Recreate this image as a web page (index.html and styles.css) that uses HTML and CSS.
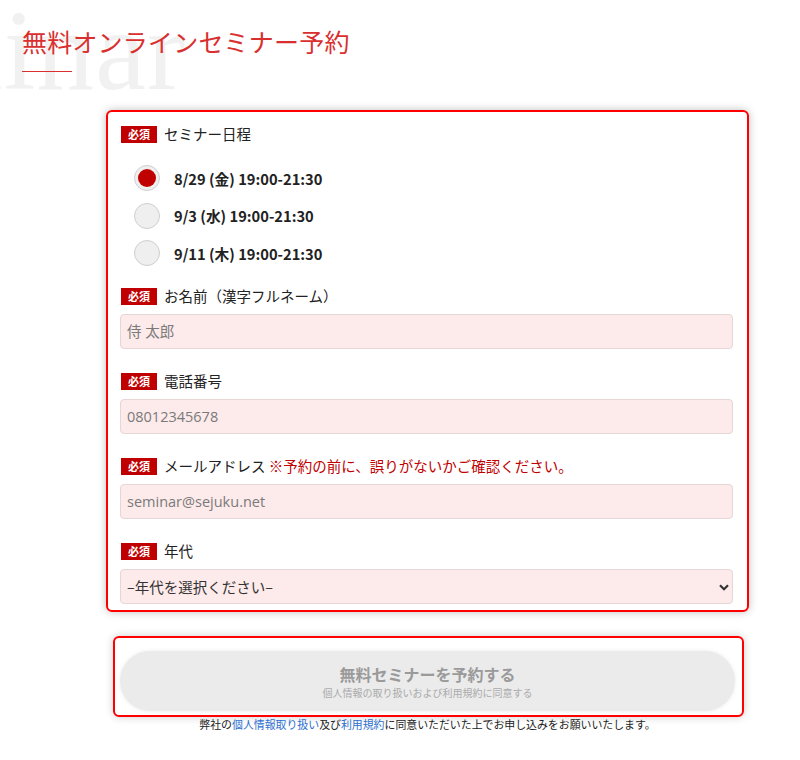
FILE: index.html
```html
<!DOCTYPE html>
<html lang="ja">
<head>
<meta charset="utf-8">
<title>無料オンラインセミナー予約</title>
<link rel="stylesheet" href="styles.css">
</head>
<body>
<header class="head">
  <span class="watermark" aria-hidden="true">Seminar</span>
  <h1 class="title">無料オンラインセミナー予約</h1>
  <div class="title-line"></div>
</header>

<main class="main">
  <form class="form-box">
    <div class="field field-date">
      <div class="label-row"><span class="badge">必須</span><span class="label">セミナー日程</span></div>
      <div class="radios">
        <label class="radio-row"><span class="radio checked"></span><span class="radio-text">8/29 (金) 19:00-21:30</span></label>
        <label class="radio-row"><span class="radio"></span><span class="radio-text">9/3 (水) 19:00-21:30</span></label>
        <label class="radio-row"><span class="radio"></span><span class="radio-text">9/11 (木) 19:00-21:30</span></label>
      </div>
    </div>

    <div class="field">
      <div class="label-row"><span class="badge">必須</span><span class="label">お名前（漢字フルネーム）</span></div>
      <input class="input" type="text" placeholder="侍 太郎">
    </div>

    <div class="field">
      <div class="label-row"><span class="badge">必須</span><span class="label">電話番号</span></div>
      <input class="input" type="text" placeholder="08012345678">
    </div>

    <div class="field">
      <div class="label-row"><span class="badge">必須</span><span class="label">メールアドレス <span class="note">※予約の前に、誤りがないかご確認ください。</span></span></div>
      <input class="input" type="text" placeholder="seminar@sejuku.net">
    </div>

    <div class="field">
      <div class="label-row"><span class="badge">必須</span><span class="label">年代</span></div>
      <div class="select-wrap">
        <div class="select">–年代を選択ください–</div>
        <svg class="chevron" width="10" height="7" viewBox="0 0 10 7"><path d="M1 1.2 L5 5.2 L9 1.2" fill="none" stroke="#333" stroke-width="2.2"/></svg>
      </div>
    </div>
  </form>

  <div class="submit-box">
    <div class="submit">
      <span class="submit-main">無料セミナーを予約する</span>
      <span class="submit-sub">個人情報の取り扱いおよび利用規約に同意する</span>
    </div>
  </div>

  <p class="agree">弊社の<a href="#">個人情報取り扱い</a>及び<a href="#">利用規約</a>に同意いただいた上でお申し込みをお願いいたします。</p>
</main>
</body>
</html>
```

FILE: styles.css
```css
* { box-sizing: border-box; }
html, body { margin: 0; padding: 0; background: #fff; }
body {
  font-family: "Noto Sans CJK JP", "Noto Sans", sans-serif;
  color: #333;
  width: 800px;
  overflow: hidden;
}

.head {
  position: relative;
  height: 108px;
  padding: 26px 0 0 22px;
  overflow: hidden;
}
.watermark {
  position: absolute;
  left: -204px;
  top: -7px;
  font-family: "Liberation Serif", serif;
  font-size: 115px;
  line-height: 115px;
  color: #f1f1f1;
  letter-spacing: 1px;
  z-index: 0;
  white-space: nowrap;
}
.title {
  position: relative;
  z-index: 1;
  margin: 0;
  font-family: "Liberation Serif", "Noto Sans CJK JP", serif;
  font-weight: 400;
  font-size: 25px;
  line-height: 36px;
  letter-spacing: 0.2px;
  color: #d9302f;
}
.title-line {
  position: relative;
  z-index: 1;
  width: 50px;
  height: 1px;
  background: #d9302f;
  margin-top: 9px;
}

.main {
  padding-left: 106px;
  width: 749px;
}

.form-box {
  border: 2px solid #f00;
  border-radius: 6px;
  box-shadow: 0 0 8px rgba(0,0,0,0.25);
  padding: 12px 14px 6px 12px;
  margin-top: 2px;
  display: flex;
  flex-direction: column;
  gap: 22px;
  background: #fff;
}

.field { display: flex; flex-direction: column; gap: 8px; }
.field-date { gap: 21px; margin-bottom: -2px; }

.label-row {
  display: flex;
  align-items: center;
  height: 20px;
  padding-left: 1px;
}
.badge {
  display: inline-flex;
  align-items: center;
  justify-content: center;
  width: 36px;
  height: 17px;
  background: #c00000;
  color: #fff;
  font-size: 11px;
  font-weight: 700;
  line-height: 1;
  margin-right: 7px;
}
.label {
  font-size: 14.5px;
  color: #222;
  line-height: 20px;
}
.note { color: #c00000; }

.radios {
  display: flex;
  flex-direction: column;
  gap: 11.5px;
  padding-left: 14px;
}
.radio-row {
  display: flex;
  align-items: center;
  height: 26px;
}
.radio {
  width: 26px;
  height: 26px;
  border-radius: 50%;
  background: #efefef;
  border: 1px solid #cfcfcf;
  display: flex;
  align-items: center;
  justify-content: center;
  margin-right: 14px;
}
.radio.checked::after {
  content: "";
  width: 18px;
  height: 18px;
  border-radius: 50%;
  background: #c00000;
}
.radio-text {
  font-family: "Noto Sans CJK JP", sans-serif;
  font-weight: 700;
  font-size: 14.7px;
  color: #222;
}

.input, .select {
  display: block;
  width: 100%;
  height: 35px;
  background: #fdeaea;
  border: 1px solid #e6d6d6;
  border-radius: 4px;
  padding: 0 6px;
  font-family: "Open Sans", "Noto Sans CJK JP", sans-serif;
  font-size: 14.5px;
  color: #333;
  outline: none;
}
.input::placeholder { color: #7a7a7a; }
.select {
  display: flex;
  align-items: center;
  font-family: "Noto Sans CJK JP", sans-serif;
  color: #333;
}
.select-wrap { position: relative; }
.chevron {
  position: absolute;
  right: 4px;
  top: 15px;
}

.submit-box {
  margin: 24px 5px 0 7px;
  border: 2px solid #f00;
  border-radius: 6px;
  box-shadow: 0 0 8px rgba(0,0,0,0.2);
  padding: 13px 7px 4px 5px;
  background: #fff;
}
.submit {
  height: 60px;
  border-radius: 30px;
  background: #ebebeb;
  box-shadow: 0 0 4px rgba(0,0,0,0.08);
  display: flex;
  flex-direction: column;
  align-items: center;
  justify-content: center;
  gap: 1px;
}
.submit-main {
  font-size: 16px;
  font-weight: 700;
  color: #9a9a9a;
  line-height: 22px;
}
.submit-sub {
  font-size: 10px;
  color: #aaa;
  line-height: 13px;
}

.agree {
  margin: 0;
  text-align: center;
  font-size: 10.9px;
  line-height: 14px;
  color: #222;
}
.agree a { color: #2f6fcf; text-decoration: none; }
```
